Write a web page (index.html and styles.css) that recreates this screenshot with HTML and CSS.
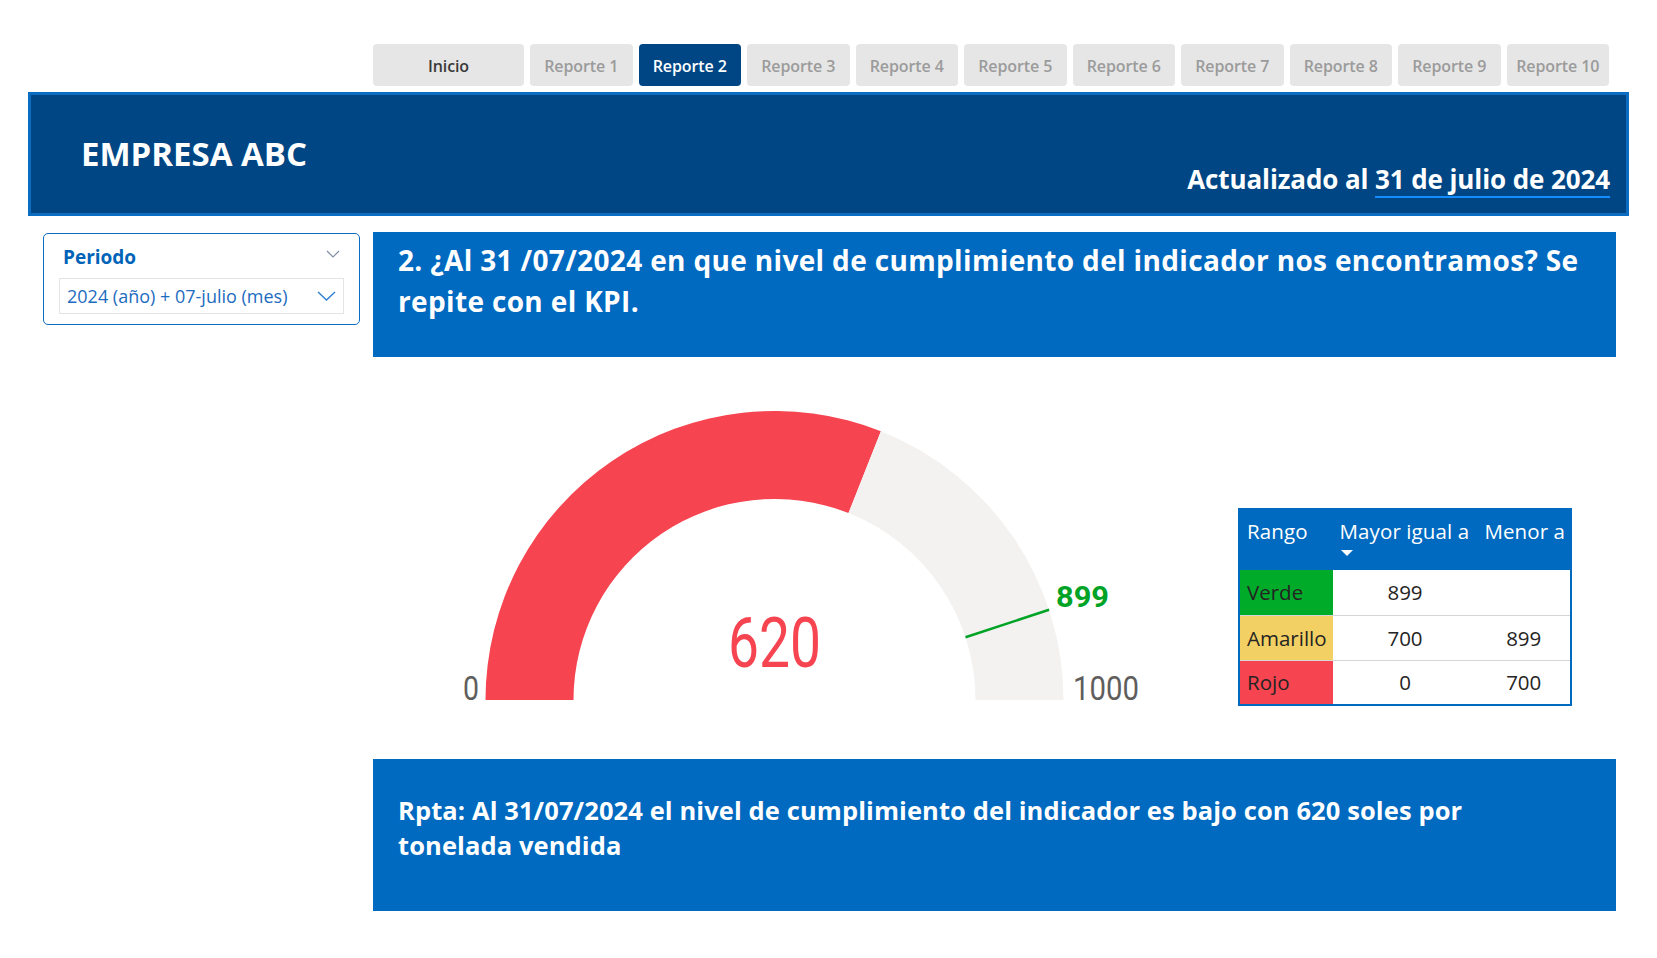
FILE: index.html
```html
<!DOCTYPE html>
<html lang="es">
<head>
<meta charset="utf-8">
<title>Empresa ABC - Reporte 2</title>
<link rel="stylesheet" href="styles.css">
</head>
<body>
<div class="page">
  <nav class="tabs">
    <div class="tab tab-home">Inicio</div>
    <div class="tab">Reporte 1</div>
    <div class="tab tab-active">Reporte 2</div>
    <div class="tab">Reporte 3</div>
    <div class="tab">Reporte 4</div>
    <div class="tab">Reporte 5</div>
    <div class="tab">Reporte 6</div>
    <div class="tab">Reporte 7</div>
    <div class="tab">Reporte 8</div>
    <div class="tab">Reporte 9</div>
    <div class="tab">Reporte 10</div>
  </nav>

  <header class="banner">
    <h1 class="brand">EMPRESA ABC</h1>
    <div class="updated">Actualizado al <span class="updated-date">31 de julio de 2024</span></div>
  </header>

  <div class="content">
    <aside class="side">
      <div class="slicer">
        <div class="slicer-head">
          <span class="slicer-title">Periodo</span>
          <svg class="chev-small" width="14" height="8" viewBox="0 0 14 8"><path d="M1 1 L7 7 L13 1" fill="none" stroke="#7d8fa6" stroke-width="1.2"/></svg>
        </div>
        <div class="dropdown">
          <span class="dropdown-text">2024 (año) + 07-julio (mes)</span>
          <svg class="chev" width="19" height="10" viewBox="0 0 19 10"><path d="M1 1 L9.5 9 L18 1" fill="none" stroke="#2f7fd0" stroke-width="1.4"/></svg>
        </div>
      </div>
    </aside>

    <section class="main">
      <div class="question">2. ¿Al 31 /07/2024 en que nivel de cumplimiento del indicador nos encontramos? Se repite con el KPI.</div>

      <div class="viz">
        <svg class="gauge" width="720" height="310" viewBox="0 0 720 310">
          <path d="M45.5 300 A289 289 0 0 1 440.9 31.3 L408.5 113.1 A201 201 0 0 0 133.5 300 Z" fill="#f64450"/>
          <path d="M440.9 31.3 A289 289 0 0 1 623.5 300 L535.5 300 A201 201 0 0 0 408.5 113.1 Z" fill="#f3f2f1"/>
          <line x1="525.5" y1="237.3" x2="609.1" y2="209.8" stroke="#00a325" stroke-width="2.5"/>
          <text class="g-min" x="23" y="300" textLength="16" lengthAdjust="spacingAndGlyphs">0</text>
          <text class="g-max" x="633" y="300" textLength="66" lengthAdjust="spacingAndGlyphs">1000</text>
          <text class="g-val" x="288" y="267" textLength="93" lengthAdjust="spacingAndGlyphs">620</text>
          <text class="g-target" x="616" y="207" textLength="53" lengthAdjust="spacingAndGlyphs">899</text>
        </svg>

        <table class="ranges">
          <thead>
            <tr>
              <th class="c-name">Rango</th>
              <th class="c-min">Mayor igual a<span class="sort"></span></th>
              <th class="c-max">Menor a</th>
            </tr>
          </thead>
          <tbody>
            <tr>
              <td class="c-name verde">Verde</td>
              <td class="c-num">899</td>
              <td class="c-num"></td>
            </tr>
            <tr>
              <td class="c-name amarillo">Amarillo</td>
              <td class="c-num">700</td>
              <td class="c-num">899</td>
            </tr>
            <tr>
              <td class="c-name rojo">Rojo</td>
              <td class="c-num">0</td>
              <td class="c-num">700</td>
            </tr>
          </tbody>
        </table>
      </div>

      <div class="answer">Rpta: Al 31/07/2024 el nivel de cumplimiento del indicador es bajo con 620 soles por tonelada vendida</div>
    </section>
  </div>
</div>
</body>
</html>
```

FILE: styles.css
```css
* { box-sizing: border-box; }

html, body {
  margin: 0;
  padding: 0;
  background: #ffffff;
}

body {
  font-family: "Open Sans", "Noto Sans", sans-serif;
  color: #252423;
}

.page {
  width: 1657px;
  height: 958px;
  padding-top: 44px;
}

/* ---------- tabs ---------- */
.tabs {
  display: flex;
  gap: 6px;
  margin-left: 373px;
  height: 42px;
}

.tab {
  width: 102.5px;
  height: 42px;
  background: #e6e6e6;
  border-radius: 4px;
  display: flex;
  align-items: center;
  justify-content: center;
  padding-top: 2px;
  font-size: 16px;
  font-weight: 600;
  letter-spacing: -0.1px;
  color: #9b9b9b;
}

.tab-home {
  width: 151px;
  color: #3a3a3a;
}

.tab-active {
  background: #004684;
  color: #ffffff;
}

/* ---------- banner ---------- */
.banner {
  margin: 6px 0 0 28px;
  width: 1601px;
  height: 124px;
  background: #004684;
  border: 3px solid #0a6dc2;
  display: flex;
  justify-content: space-between;
  align-items: flex-start;
  padding: 0 16px 0 50px;
}

.brand {
  margin: 39px 0 0 0;
  font-size: 33px;
  line-height: 40px;
  font-weight: 700;
  color: #ffffff;
  letter-spacing: 0;
}

.updated {
  margin-top: 68px;
  font-size: 26px;
  line-height: 32px;
  font-weight: 700;
  color: #ffffff;
  letter-spacing: -0.1px;
}

.updated-date {
  text-decoration: underline;
  text-decoration-color: #118dff;
  text-decoration-thickness: 2px;
  text-underline-offset: 7px;
}

/* ---------- content ---------- */
.content {
  display: flex;
  gap: 13px;
  margin-top: 16px;
  padding-left: 43px;
}

.side {
  width: 317px;
  padding-top: 1px;
}

.slicer {
  border: 1px solid #0a6dc2;
  border-radius: 5px;
  height: 92px;
  padding: 0 15px;
}

.slicer-head {
  height: 44px;
  display: flex;
  align-items: center;
  justify-content: space-between;
  padding: 2px 4px 0 4px;
}

.slicer-title {
  font-size: 19px;
  font-weight: 700;
  color: #0063b8;
}

.chev-small { margin-top: -6px; }

.dropdown {
  height: 36px;
  border: 1px solid #e4e4e4;
  display: flex;
  align-items: center;
  justify-content: space-between;
  padding: 0 7px 0 7px;
}

.dropdown-text {
  font-size: 18px;
  color: #1d6cc0;
  letter-spacing: 0;
}

.main {
  width: 1243px;
}

.question {
  height: 125px;
  background: #0069c0;
  color: #ffffff;
  font-size: 28px;
  line-height: 41px;
  font-weight: 700;
  padding: 8px 20px 0 25px;
  letter-spacing: 0.35px;
}

.viz {
  height: 402px;
  display: flex;
  align-items: flex-start;
  padding: 43px 0 0 67px;
  gap: 78px;
}

.gauge {
  display: block;
  flex: none;
}

.gauge text {
  font-family: "Roboto", "Open Sans", sans-serif;
}

.g-min, .g-max {
  font-size: 33px;
  fill: #605e5c;
}

.g-val {
  font-size: 70px;
  fill: #f64450;
}

.g-target {
  font-size: 29px;
  font-weight: 700;
  fill: #00a325;
}

/* ---------- ranges table ---------- */
.ranges {
  margin-top: 108px;
  border-collapse: collapse;
  border: 2px solid #0069c0;
  width: 334px;
  font-size: 20.5px;
}

.ranges th {
  background: #0069c0;
  color: #ffffff;
  font-weight: 400;
  text-align: left;
  vertical-align: top;
  height: 61px;
  padding: 7px 0 0 7px;
  position: relative;
  letter-spacing: 0.1px;
  white-space: nowrap;
}

.ranges .c-name { width: 93px; }
.ranges .c-min { width: 144px; }
.ranges .c-max { width: 93px; }

.sort {
  position: absolute;
  left: 8px;
  top: 40px;
  width: 0;
  height: 0;
  border-left: 6.5px solid transparent;
  border-right: 6.5px solid transparent;
  border-top: 6px solid #ffffff;
}

.ranges td {
  height: 45px;
  border-bottom: 1px solid #d6d6d6;
  padding: 0;
  vertical-align: middle;
  color: #252423;
  letter-spacing: 0;
}

.ranges tbody tr:last-child td { border-bottom: none; }

.ranges td.c-name {
  padding-left: 7px;
}

.ranges td.c-num {
  text-align: center;
  background: #ffffff;
}

.verde { background: #00ab2a; }
.amarillo { background: #f2d063; }
.rojo { background: #f64450; }

/* ---------- answer ---------- */
.answer {
  height: 152px;
  background: #0069c0;
  color: #ffffff;
  font-size: 25.5px;
  line-height: 35px;
  font-weight: 700;
  padding: 34px 120px 0 25px;
  letter-spacing: 0.1px;
}
```
